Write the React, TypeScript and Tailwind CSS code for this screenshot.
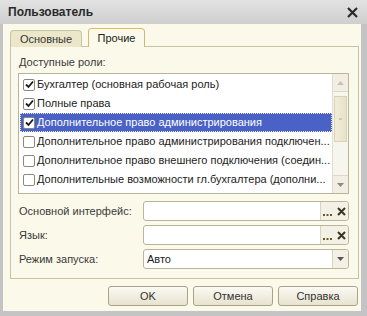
import React from "react";

const Check = ({ checked }: { checked: boolean }) => (
  <div className="w-[12px] h-[12px] shrink-0 rounded-[2px] border border-[#8a8a7a] bg-white flex items-center justify-center">
    {checked && (
      <svg width="9" height="9" viewBox="0 0 9 9">
        <path d="M1 4.5 L3.5 7 L8 1.5" fill="none" stroke="#1a1a1a" strokeWidth="1.8" />
      </svg>
    )}
  </div>
);

const rows = [
  { t: "Бухгалтер (основная рабочая роль)", c: true },
  { t: "Полные права", c: true },
  { t: "Дополнительное право администрирования", c: true, sel: true },
  { t: "Дополнительное право администрирования подключен...", c: false },
  { t: "Дополнительное право внешнего подключения (соедин...", c: false },
  { t: "Дополнительные возможности гл.бухгалтера (дополни...", c: false },
  { t: "Дополнительные права пользователя", c: false },
];

const Field = ({ label, value, combo }: { label: string; value?: string; combo?: boolean }) => (
  <div className="flex items-center h-[20px]">
    <div className="w-[124px] text-[#3a3a3a]">{label}</div>
    <div className="flex-1 h-[20px] rounded-[3px] border border-[#b9b49a] bg-white flex items-center">
      <div className="flex-1 pl-[3px] text-[#222]">{value}</div>
      {combo ? (
        <div className="w-[16px] h-full border-l border-[#d8d4c0] bg-[#f3f1e6] flex items-center justify-center rounded-r-[3px]">
          <svg width="7" height="4" viewBox="0 0 7 4"><path d="M0 0 H7 L3.5 4 Z" fill="#555" /></svg>
        </div>
      ) : (
        <div className="flex h-full">
          <div className="w-[14px] h-full border-l border-[#d8d4c0] bg-[#f3f1e6] flex items-end justify-center pb-[4px]">
            <svg width="9" height="2" viewBox="0 0 9 2"><rect x="0" y="0" width="2" height="2" fill="#6b5b1e" /><rect x="3.5" y="0" width="2" height="2" fill="#6b5b1e" /><rect x="7" y="0" width="2" height="2" fill="#6b5b1e" /></svg>
          </div>
          <div className="w-[14px] h-full bg-[#f3f1e6] flex items-center justify-center rounded-r-[3px]">
            <svg width="9" height="9" viewBox="0 0 9 9"><path d="M1 1 L8 8 M8 1 L1 8" stroke="#3a3520" strokeWidth="2" /></svg>
          </div>
        </div>
      )}
    </div>
  </div>
);

const Btn = ({ t }: { t: string }) => (
  <div className="w-[80px] h-[20px] rounded-[3px] border border-[#a9a38a] bg-gradient-to-b from-[#fbfaf3] to-[#e7e3cf] flex items-center justify-center text-[#333]">
    {t}
  </div>
);

export default function App() {
  return (
    <div
      className="w-[367px] h-[316px] bg-[#c4c4c4] flex flex-col text-[11px] leading-none"
      style={{ fontFamily: '"Liberation Sans", Arial, sans-serif' }}
    >
      <div className="h-[24px] bg-gradient-to-b from-[#e2e2e2] to-[#cfcfcf] flex items-center justify-between pl-[8px] pr-[9px]">
        <span className="font-bold text-[12px] text-[#2a2a2a]">Пользователь</span>
        <svg width="11" height="11" viewBox="0 0 11 11"><path d="M1 1 L10 10 M10 1 L1 10" stroke="#2a2a2a" strokeWidth="2.2" /></svg>
      </div>
      <div className="flex-1 ml-[3px] mr-[6px] mb-[5px] bg-[#fbf9ea] flex flex-col pl-[7px] pr-[2px] pt-[4px]">
        <div className="flex items-end h-[19px] ml-0">
          <div className="w-[72px] h-[17px] rounded-t-[4px] border border-b-0 border-[#c9c3a5] bg-[#ece6cb] flex items-center justify-center text-[#333]">
            Основные
          </div>
          <div className="w-[6px] border-b border-[#c9c3a5]" />
          <div className="w-[57px] h-[19px] rounded-t-[4px] border border-b-0 border-[#cdb77a] border-t-[#e0b860] bg-[#fbf9ea] flex items-center justify-center text-[#222]">
            Прочие
          </div>
          <div className="flex-1 border-b border-[#c9c3a5]" />
        </div>
        <div className="h-[232px] border border-t-0 border-[#c9c3a5] pl-[7px] pr-[9px] pt-[10px] flex flex-col">
          <div className="text-[#3a3a3a] pl-[1px] h-[16px]">Доступные роли:</div>
          <div className="h-[121px] border border-[#b9b49a] bg-white flex overflow-hidden">
            <div className="flex-1 min-w-0 pt-[1px] pl-[1px] overflow-hidden">
              {rows.map((r, i) => (
                <div
                  key={i}
                  className={`h-[19px] flex items-center pl-[3px] gap-[2px] whitespace-nowrap overflow-hidden ${
                    r.sel ? "bg-[#4a61c6] text-white outline-1 outline-dotted outline-[#e5e5e5] -outline-offset-1" : "text-[#222]"
                  }`}
                >
                  <Check checked={r.c} />
                  <span>{r.t}</span>
                </div>
              ))}
            </div>
            <div className="w-[16px] shrink-0 bg-[#f6f5ee] border-l border-[#e2dfcf] flex flex-col">
              <div className="h-[18px] border-b border-[#ddd9c4] bg-[#f1efe3] flex items-center justify-center">
                <svg width="7" height="4" viewBox="0 0 7 4"><path d="M0 4 H7 L3.5 0 Z" fill="#c7c3b0" /></svg>
              </div>
              <div className="h-[4px]" />
              <div className="h-[46px] mx-[1px] border border-[#d8d3b8] bg-gradient-to-r from-[#f1edd9] to-[#e7e2c8] flex items-center justify-center">
                <div className="w-[3px] h-[2px] bg-[#cfc9ac]" />
              </div>
              <div className="flex-1" />
              <div className="h-[18px] border-t border-[#ddd9c4] bg-[#f1efe3] flex items-center justify-center">
                <svg width="7" height="4" viewBox="0 0 7 4"><path d="M0 0 H7 L3.5 4 Z" fill="#8f8b78" /></svg>
              </div>
            </div>
          </div>
          <div className="flex flex-col gap-[4px] mt-[7px] pl-[1px]">
            <Field label="Основной интерфейс:" />
            <Field label="Язык:" />
            <Field label="Режим запуска:" value="Авто" combo />
          </div>
        </div>
        <div className="flex justify-end gap-[5px] pr-[1px] mt-[7px]">
          <Btn t="OK" />
          <Btn t="Отмена" />
          <Btn t="Справка" />
        </div>
      </div>
    </div>
  );
}
